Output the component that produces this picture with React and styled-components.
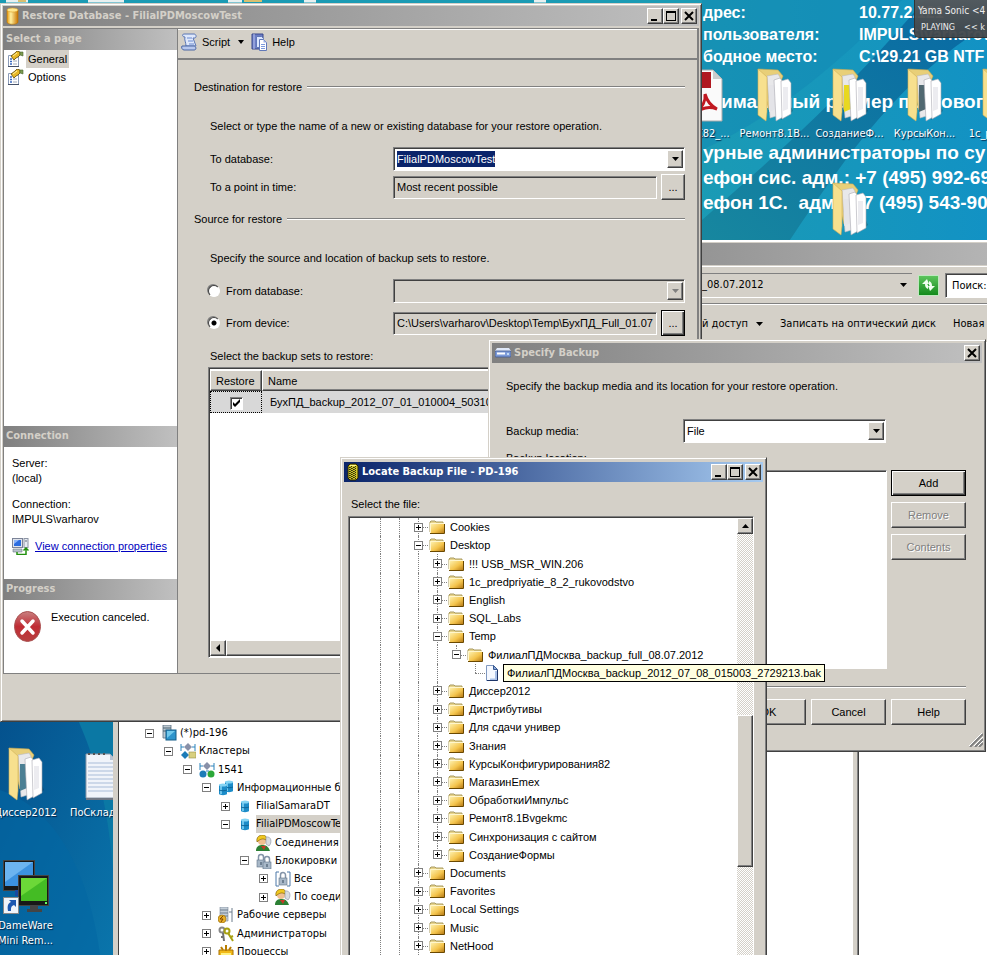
import React from 'react';
import styled, { createGlobalStyle, css } from 'styled-components';

const face = '#d4d0c8';
const shade = '#808080';
const dark = '#404040';
const navy = '#0a246a';
const sans = '"Liberation Sans", Arial, sans-serif';
const tahoma = '"DejaVu Sans Condensed", "DejaVu Sans", Tahoma, sans-serif';

const raised = css`
  border: 1px solid;
  border-color: #fff ${dark} ${dark} #fff;
  box-shadow: inset -1px -1px ${shade};
`;
const sunken = css`
  border: 1px solid;
  border-color: ${shade} #fff #fff ${shade};
  box-shadow: inset 1px 1px ${dark};
`;

const GlobalStyle = createGlobalStyle`
  * { box-sizing: border-box; }
  body { margin: 0; overflow: hidden; }
  button, input, select { font: inherit; color: inherit; }
`;

/* ---------- desktop ---------- */
const Desktop = styled.main`
  position: relative;
  height: 100vh;
  overflow: hidden;
  background: #05659c;
  font: 11px/16px ${sans};
  color: #000;
  white-space: nowrap;
`;
const Wallpaper = styled.svg`
  position: absolute;
  inset: 0;
  width: 100%;
  height: 100%;
`;
const HostInfo = styled.section`
  position: absolute;
  left: 703px;
  top: 2px;
  color: #fff;
  font: bold 16px/22px ${sans};
`;
const HostFacts = styled.dl`
  display: grid;
  grid-template-columns: 156px auto;
  margin: 0 0 21px;
  dt, dd { margin: 0; }
`;
const Notice = styled.p`
  margin: 0 0 26px;
  padding-left: 18px;
  font-size: 19px;
  line-height: 25px;
`;
const Contacts = styled.p`
  margin: 0;
  font-size: 19px;
  line-height: 25px;
  white-space: pre;
`;
const Shortcuts = styled.div`
  position: absolute;
  left: ${(p) => p.$left}px;
  top: ${(p) => p.$top}px;
  display: grid;
  grid-template-columns: repeat(5, 75px);
  row-gap: ${(p) => p.$gap}px;
`;
const Shortcut = styled.a`
  display: flex;
  flex-direction: column;
  align-items: center;
  gap: 3px;
  grid-column: ${(p) => p.$col || 'auto'};
  color: #fff;
  font: 11px/15px ${tahoma};
  text-align: center;
  text-decoration: none;
  text-shadow: 1px 1px 1px #024;
`;
const Player = styled.aside`
  position: absolute;
  left: 914px;
  right: 0;
  top: 0;
  height: 38px;
  padding: 2px 0 0 3px;
  border: 1px solid #333;
  border-width: 0 0 1px 1px;
  border-radius: 0 0 0 5px;
  background: linear-gradient(#55595cf4, #404549f4);
  color: #eee;
  font: 10px/17px ${tahoma};
  overflow: hidden;
`;
const PlayerState = styled.div`
  display: flex;
  gap: 9px;
  padding-left: 3px;
  font-size: 9px;
`;

/* ---------- windows ---------- */
const Window = styled.section`
  position: absolute;
  display: flex;
  flex-direction: column;
  background: ${face};
  border: 1px solid;
  border-color: ${face} ${dark} ${dark} ${face};
  box-shadow: inset 1px 1px #fff, inset -1px -1px ${shade};
`;
const RestoreWindow = styled(Window)`
  left: 0;
  top: 3px;
  width: 702px;
  height: 719px;
  padding: 2px;
`;
const SpecifyWindow = styled(Window)`
  left: 488px;
  top: 339px;
  width: 498px;
  height: 413px;
  padding: 3px;
`;
const LocateWindow = styled(Window)`
  left: 340px;
  top: 457px;
  bottom: 0;
  width: 427px;
  padding: 4px 3px 0;
  border-bottom: 0;
  box-shadow: inset 1px 1px #fff, inset -1px 0 ${shade};
`;
const TitleBar = styled.header`
  display: flex;
  align-items: center;
  flex: none;
  height: 20px;
  padding: 0 2px 0 3px;
  gap: 3px;
  background: ${(p) => (p.$active ? `linear-gradient(90deg, ${navy}, #a6caf0)` : 'linear-gradient(90deg, #808080, #c0c0c0)')};
  color: ${(p) => (p.$active ? '#fff' : face)};
`;
const Title = styled.h1`
  flex: 1;
  margin: 0;
  font: bold 11px/18px ${tahoma};
`;
const CaptionButtons = styled.div`
  display: flex;
  button:last-child:not(:first-child) { margin-left: 2px; }
`;
const CaptionButton = styled.button`
  ${raised}
  display: grid;
  place-items: center;
  width: 16px;
  height: 16px;
  padding: 0;
  background: ${face};
  color: #000;
`;
const Button = styled.button`
  ${raised}
  width: ${(p) => p.$w || 75}px;
  height: 26px;
  padding: 0;
  background: ${face};
  ${(p) => p.$default && css`
    border-color: #000;
    box-shadow: inset 1px 1px #fff, inset -1px -1px ${dark}, inset -2px -2px ${shade};
  `}
  &:disabled {
    color: ${shade};
    text-shadow: 1px 1px #fff;
  }
`;

/* ---------- form parts ---------- */
const Combo = styled.div`
  ${sunken}
  position: relative;
  display: flex;
  align-items: center;
  width: ${(p) => (p.$w ? `${p.$w}px` : 'auto')};
  height: 24px;
  padding: 2px 1px 2px 2px;
  background: ${(p) => (p.$off ? face : '#fff')};
`;
const ComboSelect = styled.select`
  flex: 1;
  align-self: stretch;
  border: 0;
  padding: 0 1px;
  background: none;
  appearance: none;
  outline: 0;
`;
const ComboInput = styled.input`
  field-sizing: content;
  height: 16px;
  margin: 0 auto 0 1px;
  padding: 0;
  border: 0;
  background: ${navy};
  color: #fff;
  outline: 0;
`;
const ComboArrow = styled.span`
  ${raised}
  display: grid;
  place-items: center;
  width: 16px;
  align-self: stretch;
  background: ${face};
  color: ${(p) => (p.$off ? shade : '#000')};
  pointer-events: none;
`;
const ReadOnly = styled.input`
  ${sunken}
  flex: 1;
  min-width: 0;
  height: 23px;
  padding: 0 0 0 3px;
  background: ${face};
  outline: 0;
`;

/* ---------- Restore Database ---------- */
const RestoreBody = styled.div`
  display: grid;
  grid-template-columns: 174px 1fr;
  flex: 1;
  margin: 2px 0 45px;
  border: 1px solid ${shade};
  border-right-width: 2px;
`;
const Side = styled.aside`
  display: flex;
  flex-direction: column;
  background: #fff;
  border-right: 1px solid ${shade};
`;
const SideHead = styled.h2`
  flex: none;
  margin: 0;
  height: 21px;
  padding-left: 2px;
  background: linear-gradient(90deg, #808080, #c0c0c0);
  color: ${face};
  font: bold 11px/20px ${tahoma};
`;
const Pages = styled.nav`
  flex: 1;
  display: flex;
  flex-direction: column;
  align-items: flex-start;
`;
const PageLink = styled.a`
  display: flex;
  align-items: center;
  gap: 2px;
  height: 18px;
  padding-left: 3px;
  color: #000;
  text-decoration: none;
  span {
    padding: 0 2px;
    line-height: 18px;
    background: ${(p) => (p.$on ? face : 'none')};
  }
`;
const Connection = styled.div`
  flex: none;
  height: 132px;
  padding: 9px 8px;
  line-height: 15px;
`;
const Fact = styled.p`
  margin: 0 0 11px;
`;
const PropsLink = styled.a`
  display: flex;
  align-items: center;
  gap: 6px;
  color: #0000c0;
`;
const Progress = styled.div`
  flex: none;
  display: flex;
  gap: 10px;
  height: 73px;
  padding: 9px 10px;
  svg { margin-top: 2px; }
`;
const Main = styled.div`
  display: flex;
  flex-direction: column;
  min-width: 0;
`;
const Toolbar = styled.div`
  display: flex;
  align-items: center;
  flex: none;
  height: 31px;
  padding: 0 3px 4px;
  border-bottom: 2px solid ${shade};
  border-top: 1px solid #fff;
`;
const ToolButton = styled.button`
  display: flex;
  align-items: center;
  gap: 4px;
  padding: 0;
  margin-right: 7px;
  border: 0;
  background: none;
  span { margin-right: 4px; }
`;
const Form = styled.form`
  flex: 1;
  display: flex;
  flex-direction: column;
  min-height: 0;
  padding: 19px 12px 15px 16px;
`;
const GroupTitle = styled.h3`
  display: flex;
  align-items: center;
  gap: 5px;
  margin: 0 0 23px;
  font: inherit;
  &::after {
    content: '';
    flex: 1;
    border-top: 1px solid ${shade};
    border-bottom: 1px solid #fff;
  }
`;
const Hint = styled.p`
  margin: 0 0 13px 16px;
`;
const FieldRow = styled.div`
  display: grid;
  grid-template-columns: 199px 1fr;
  align-items: center;
  margin-bottom: ${(p) => p.$after || 3}px;
`;
const FieldLabel = styled.label`
  display: flex;
  align-items: center;
  gap: 6px;
  padding-left: ${(p) => (p.$radio ? 14 : 16)}px;
`;
const Radio = styled.input`
  appearance: none;
  width: 12px;
  height: 12px;
  margin: 0;
  border: 1px solid;
  border-color: ${dark} #fff #fff ${dark};
  border-radius: 50%;
  background: #fff;
  box-shadow: -1px -1px ${shade};
  &:checked {
    background: radial-gradient(circle, #000 2px, #fff 3px);
  }
`;
const FieldWithButton = styled.div`
  display: flex;
  align-items: center;
  gap: 4px;
  min-width: 0;
`;
const SetsLabel = styled.p`
  margin: 9px 0 3px 16px;
`;
const Sets = styled.div`
  ${sunken}
  flex: 1;
  display: flex;
  flex-direction: column;
  margin-left: 14px;
  padding: 2px 1px 1px;
  overflow: hidden;
  background: #fff;
`;
const SetsTable = styled.table`
  width: 100%;
  border-collapse: separate;
  border-spacing: 0;
  th {
    ${raised}
    height: 21px;
    padding: 0 5px;
    background: ${face};
    font-weight: normal;
    text-align: left;
  }
  th:first-child { width: 52px; }
  td {
    height: 22px;
    padding: 0 8px;
    background: #d8d8d8;
  }
  td:first-child {
    padding: 0;
    text-align: center;
    border: 1px dotted #000;
  }
`;
const Check = styled.input`
  ${sunken}
  appearance: none;
  width: 13px;
  height: 13px;
  margin: 0;
  vertical-align: middle;
  background: #fff;
  &:checked {
    background: #fff url("data:image/svg+xml,%3Csvg xmlns='http://www.w3.org/2000/svg' viewBox='0 0 11 11'%3E%3Cpath d='M2 4v3l2 2 5-5V1L4 6z'/%3E%3C/svg%3E") center / 11px no-repeat;
  }
`;
const HScroll = styled.div`
  display: flex;
  height: 16px;
  margin-top: auto;
`;
const ScrollThumb = styled.div`
  ${raised}
  flex: ${(p) => p.$size || 1};
  background: ${face};
`;

/* ---------- Specify Backup ---------- */
const SpecifyBody = styled.div`
  flex: 1;
  display: flex;
  flex-direction: column;
  padding: 15px 16px 23px 14px;
`;
const SpecifyHint = styled.p`
  margin: 0 0 25px;
`;
const MediaRow = styled.div`
  display: grid;
  grid-template-columns: 177px auto;
  justify-content: start;
  align-items: center;
  margin-bottom: 7px;
`;
const Locations = styled.div`
  flex: 1;
  display: grid;
  grid-template-columns: 1fr auto;
  gap: 4px;
  margin: 4px 0 17px;
`;
const LocationList = styled.div`
  ${sunken}
  background: #fff;
`;
const ButtonColumn = styled.div`
  display: flex;
  flex-direction: column;
  gap: 6px;
`;
const ButtonRow = styled.footer`
  display: flex;
  justify-content: flex-end;
  gap: 5px;
  padding-top: 12px;
  border-top: 1px solid ${shade};
  box-shadow: inset 0 1px #fff;
`;
const Grip = styled.svg`
  position: absolute;
  right: 2px;
  bottom: 4px;
`;

/* ---------- Locate Backup File ---------- */
const LocateLabel = styled.p`
  margin: 14px 0 4px 7px;
`;
const TreeBox = styled.div`
  ${sunken}
  flex: 1;
  display: flex;
  min-height: 0;
  margin: 0 9px 0 4px;
  padding: 1px 0 0 1px;
  border-bottom: 0;
  background: #fff;
`;
const Tree = styled.ul`
  flex: 1;
  display: flex;
  flex-direction: column;
  min-width: 0;
  margin: 0;
  padding: 0 0 0 21px;
  list-style: none;
`;
const TreeRow = styled.li`
  flex: 1;
  display: flex;
  align-items: center;
  min-height: 0;
  > svg { flex: none; margin: 0 5px 0 1px; }
`;
const Guide = styled.span`
  position: relative;
  display: grid;
  place-items: center;
  flex: none;
  width: 19px;
  align-self: stretch;
  &::before {
    content: '';
    position: absolute;
    left: 9px;
    top: 0;
    height: ${(p) => (p.$half ? '50%' : '100%')};
    border-left: ${(p) => (p.$blank ? 0 : 1)}px dotted ${shade};
  }
  &::after {
    content: '';
    position: absolute;
    left: 9px;
    right: 0;
    top: 50%;
    border-top: ${(p) => (p.$branch ? 1 : 0)}px dotted ${shade};
  }
`;
const Expander = styled.button`
  position: relative;
  z-index: 1;
  display: grid;
  place-items: center;
  width: 9px;
  height: 9px;
  padding: 0;
  border: 1px solid ${shade};
  background: #fff;
`;
const TreeLabel = styled.span`
  line-height: 18px;
`;
const SelectedFile = styled.span`
  position: relative;
  flex: 1;
  align-self: stretch;
  min-width: 0;
  background: ${navy};
`;
const Tooltip = styled.span`
  position: absolute;
  z-index: 2;
  left: 0;
  top: 0;
  height: 18px;
  padding: 0 3px;
  border: 1px solid #000;
  background: #ffffe1;
`;
const VScroll = styled.div`
  display: flex;
  flex-direction: column;
  width: 16px;
  background: repeating-conic-gradient(#fff 0 25%, ${face} 0 50%) 0 0 / 2px 2px;
`;
const ScrollGap = styled.div`
  flex: ${(p) => p.$size};
`;

/* ---------- server console and explorer ---------- */
const Console = styled(Window)`
  left: 113px;
  top: 600px;
  bottom: 0;
  width: 746px;
  padding: 123px 4px 0;
  border-bottom: 0;
  background: linear-gradient(90deg, ${face} 4px, ${dark} 4px 5px, #fff 5px calc(100% - 5px), ${face} 0);
  box-shadow: inset -1px 0 ${shade};
`;
const ConsoleTree = styled.ul`
  display: flex;
  flex-direction: column;
  flex: none;
  height: 237px;
  margin: 0;
  padding: 0 0 0 22px;
  list-style: none;
  font-family: ${tahoma};
`;
const ConsoleRow = styled.li`
  flex: 1;
  display: flex;
  align-items: center;
  padding-left: ${(p) => p.$depth * 19}px;
  > svg { margin: 0 3px 0 2px; }
`;
const ExpanderCell = styled.span`
  display: grid;
  place-items: center;
  width: 19px;
`;
const ConsoleLabel = styled.span`
  line-height: 18px;
  background: ${(p) => (p.$selected ? face : 'none')};
`;
const Explorer = styled.section`
  position: absolute;
  left: 702px;
  right: 0;
  top: 240px;
  bottom: 0;
  display: flex;
  flex-direction: column;
  border-top: 2px solid #fff;
  background: #fff;
  font-family: ${tahoma};
  overflow: hidden;
`;
const ExplorerTitle = styled.div`
  height: 24px;
  border-top: 1px solid ${face};
  border-bottom: 1px solid ${face};
  background: linear-gradient(90deg, #959595, #b4b4b4);
`;
const AddressBar = styled.div`
  display: flex;
  align-items: center;
  gap: 6px;
  height: 38px;
  background: ${face};
  border-top: 1px solid #fff;
  border-bottom: 1px solid ${shade};
`;
const Address = styled.div`
  display: flex;
  align-items: center;
  width: 210px;
  height: 25px;
  border: 1px solid;
  border-color: ${shade} #fff #fff;
  border-width: 1px 0;
  > span { flex: 1; }
  > svg { margin-right: 5px; }
`;
const GoButton = styled.button`
  display: grid;
  place-items: center;
  width: 21px;
  height: 21px;
  padding: 0;
  border: 1px solid #bfe8bf;
  background: linear-gradient(#5cc45c, #148a1c);
`;
const SearchBox = styled.input`
  ${sunken}
  flex: 1;
  min-width: 0;
  height: 25px;
  padding: 0 0 0 6px;
  border-right: 0;
  background: #fff;
  &::placeholder { color: #000; opacity: 1; }
`;
const CommandBar = styled.div`
  display: flex;
  align-items: center;
  gap: 17px;
  height: 38px;
  background: ${face};
  border-top: 1px solid #fff;
`;
const Command = styled.button`
  flex: none;
  display: flex;
  align-items: center;
  gap: 8px;
  padding: 0;
  border: 0;
  background: none;
`;

/* ---------- drawings ---------- */
const Arrow = ({ w = 7 }) => (
  <svg width={w} height="4" viewBox="0 0 7 4" preserveAspectRatio="none"><path d="M0 0h7L3.500 4z" fill="currentColor" /></svg>
);
const Glyph = ({ d }) => (
  <svg width="12" height="12" viewBox="0 0 12 12"><path d={d} fill="none" stroke="#000" strokeWidth="2" /></svg>
);
const MIN = 'M2 10h6';
const MaxGlyph = () => (
  <svg width="12" height="12" viewBox="0 0 12 12"><path d="M1 1h10v10H1zM2 3v7h8V3z" fillRule="evenodd" /></svg>
);
const CLOSE = 'M2 2l8 8M10 2l-8 8';

const Folder = () => (
  <svg width="16" height="14" viewBox="0 0 16 14">
    <defs>
      <linearGradient id="fold" x1="0" y1="0" x2="1" y2="1">
        <stop offset="0" stopColor="#fff6b8" /><stop offset=".6" stopColor="#f4c44c" /><stop offset="1" stopColor="#b87c18" />
      </linearGradient>
    </defs>
    <path d="M1 12V2l1-1h4l1 1h7v2" fill="#e8d48a" stroke="#a89a60" />
    <path d="M1 3h14v10H1z" fill="url(#fold)" />
    <path d="M1 13.500h14.500V4" fill="none" stroke="#6a4800" />
    <path d="M1.500 13V3.500H15" fill="none" stroke="#fff6cc" />
  </svg>
);
const Sheet = () => (
  <svg width="12" height="16" viewBox="0 0 12 16">
    <path d="M.5.5h7l4 4v11H.5z" fill="#f4f8ff" stroke="#8098c0" />
    <path d="M7.500.5v4h4z" fill="#88a8dc" stroke="#3a5a90" />
    <path d="M10 6v8.500H4" fill="none" stroke="#a8c0e8" strokeWidth="2" />
    <path d="M11.500 5v10.500H1" fill="none" stroke="#1c3468" />
  </svg>
);
const Cylinder = () => (
  <svg width="13" height="18" viewBox="0 0 13 18">
    <defs><linearGradient id="cyl"><stop offset="0" stopColor="#e89a10" /><stop offset=".35" stopColor="#fff0a0" /><stop offset="1" stopColor="#c87400" /></linearGradient></defs>
    <path d="M1 3v12c0 3 11 3 11 0V3z" fill="url(#cyl)" stroke="#b87400" strokeWidth=".6" />
    <ellipse cx="6.500" cy="3" rx="5.500" ry="2" fill="#ffe890" stroke="#d89a20" strokeWidth=".6" />
  </svg>
);
const ServerCylinder = () => (
  <svg width="12" height="18" viewBox="0 0 12 18">
    <path d="M1 3l2-2h6l2 2v12l-2 2H3l-2-2z" fill="#d0c428" stroke="#282400" />
    <path d="M2.500 4v11M4.500 3v13M6.500 4v12M8.500 3v13" stroke="#2c3010" strokeDasharray="1 1" />
    <path d="M3.500 3v12M5.500 4v12M7.500 3v13" stroke="#4c5010" strokeDasharray="1 1" strokeDashoffset="1" />
    <path d="M3 2.500h6" stroke="#fff88a" />
  </svg>
);
const Drive = () => (
  <svg width="16" height="12" viewBox="0 0 16 12">
    <path d="M2 1h12l2 3H0z" fill="#dfe8f8" />
    <rect x="0" y="4" width="16" height="6" rx="1" fill="#7c9ad8" stroke="#40598f" strokeWidth=".8" />
    <path d="M2 6.500h8" stroke="#fff" strokeWidth="2" /><circle cx="13" cy="7" r="1" fill="#d8f0ff" />
  </svg>
);
const PageIcon = () => (
  <svg width="17" height="16" viewBox="0 0 17 16">
    <path d="M1.500 4.500h10v11h-10z" fill="#fff" stroke="#8c9cb8" />
    <path d="M3 8h2M3 10.500h2M3 13h2" stroke="#3868c0" strokeWidth="1.500" />
    <path d="M6 10h4M6 13h4" stroke="#a0a8b8" />
    <path d="M1 15.500h11" stroke="#445068" />
    <path d="M4 5l4-3 2-2 3 1v3l-2 2-2 1-2 2z" fill="#e8b828" stroke="#604800" strokeWidth=".8" />
    <path d="M6 5l4-3" stroke="#fff0a0" /><path d="M13 1h3v4l-3-1z" fill="#7c9c50" stroke="#4c6430" strokeWidth=".6" />
  </svg>
);
const ScriptIcon = () => (
  <svg width="17" height="18" viewBox="0 0 17 18">
    <path d="M3 1h10c2 0 3 3 1 4h-2c1 3 2 5 3 8H5C5 9 3 7 4 4 1 4 1 1 3 1z" fill="#dfe8fb" stroke="#5a76b4" />
    <path d="M1 13h12c2 0 3 4 0 4H3c-2 0-3-3-2-4z" fill="#b8c8ee" stroke="#4a66a4" />
    <path d="M6 5h5M7 8h5M8 11h5" stroke="#6a8ad0" />
  </svg>
);
const HelpIcon = () => (
  <svg width="17" height="18" viewBox="0 0 17 18">
    <path d="M1 1h11v15H1z" fill="#6c7cc4" stroke="#38488c" /><path d="M3 1v15" stroke="#b8c4f0" />
    <path d="M5.500 3.500h5l2 2v9h-7z" fill="#dce6ff" stroke="#6078b8" />
    <path d="M8.500 6.500h4l3 3v8h-7z" fill="#fff" stroke="#6078b8" /><path d="M12.500 6.500v3h3z" fill="#9cb0e4" /><path d="M10 11.500h4M10 13.500h4M10 15.500h4" stroke="#7c9adc" />
  </svg>
);
const NetIcon = () => (
  <svg width="17" height="17" viewBox="0 0 17 17">
    <rect x=".5" y=".5" width="10" height="9" fill="#e0e4ec" stroke="#7c8498" /><rect x="2" y="2" width="7" height="6" fill="#2c6ce0" /><path d="M2 2h5L2 6z" fill="#8cb4f8" />
    <path d="M1 11h9v3H1z" fill="#b8c0cc" stroke="#707888" strokeWidth=".6" />
    <rect x="12" y=".5" width="4" height="9" fill="#e8ecf4" stroke="#8c94a4" /><path d="M13 3h2" stroke="#606878" />
    <path d="M5 14v2.500h9V10M11.500 12.500L14 10l2.500 2.500" fill="none" stroke="#20900c" strokeWidth="1.500" />
  </svg>
);
const ErrorIcon = () => (
  <svg width="27" height="31" viewBox="0 0 27 31">
    <defs><linearGradient id="err" x1="0" y1="0" x2="0" y2="1"><stop offset="0" stopColor="#c88080" /><stop offset=".5" stopColor="#c02c34" /><stop offset="1" stopColor="#b84040" /></linearGradient></defs>
    <ellipse cx="13.500" cy="15.500" rx="13" ry="15" fill="url(#err)" stroke="#a85050" />
    <path d="M8 10l11 12M19 10L8 22" stroke="#fff" strokeWidth="3.500" strokeLinecap="round" />
  </svg>
);
const BigFolder = ({ tint = '#e4e4e8' }) => (
  <svg width="36" height="56" viewBox="0 0 36 56">
    <path d="M30 30l6 14-12 9z" fill="#0003" />
    <path d="M1 2l20 1 5 6-14 34z" fill="#e8cf78" stroke="#c8a850" strokeWidth=".6" />
    <path d="M10 9l11-2 2 3v38l-10 3z" fill="#e8e8ea" stroke="#b8b8bc" strokeWidth=".6" />
    <path d="M12 18h7v24l-7 3z" fill={tint} />
    <path d="M17 13l6-2 3 4v35l-7 4z" fill="#fff" stroke="#a8a8b0" strokeWidth=".6" />
    <path d="M24 14l7-2 3 4v31l-9 5z" fill="#fff" stroke="#a8a8b0" strokeWidth=".6" />
    <path d="M26 20h5v22l-5 2z" fill="#ececf0" />
    <path d="M1 2l9 8v35l-1 9-8-6z" fill="#f7e08e" stroke="#d0b058" strokeWidth=".6" />
  </svg>
);
const PdfIcon = () => (
  <svg width="46" height="56" viewBox="0 0 46 56">
    <path d="M2 3h34l9 9v42H2z" fill="#fafafa" stroke="#aaa" />
    <path d="M2 5h32v16H2z" fill="#b01820" /><path d="M36 3v9h9z" fill="#ccc" />
    <path d="M18 47c8-8 11-13 10-20 2 7 6 12 12 15-8-3-16-1-22 5z" fill="none" stroke="#c01820" strokeWidth="3" />
  </svg>
);
const NoteIcon = () => (
  <svg width="32" height="56" viewBox="0 0 32 56">
    <path d="M1 8h24l6 6v38H1z" fill="#f0f4fa" stroke="#8c98a8" />
    <path d="M3 17h26M3 21h26M3 25h26M3 29h26M3 33h26M3 37h26M3 41h26M3 45h26" stroke="#a8bcd8" />
    <path d="M3 8h20" stroke="#555" strokeWidth="2" strokeDasharray="2 3" /><path d="M25 8v6h6z" fill="#b8c4d4" />
    <path d="M1 53h30" stroke="#707884" strokeWidth="2" />
  </svg>
);
const DameWareIcon = () => (
  <svg width="46" height="55" viewBox="0 0 46 55">
    <rect x=".5" y=".5" width="31" height="30" fill="#181818" stroke="#444" /><rect x="2" y="2" width="28" height="24" fill="#3c92e0" /><path d="M2 2h28L2 22z" fill="#6cb4f0" />
    <path d="M12 30h8v6h-8z" fill="#1848a0" />
    <rect x="15.500" y="15.500" width="30" height="30" fill="#181818" stroke="#444" /><rect x="18" y="18" width="26" height="23" fill="#44bc24" /><path d="M18 18h26L18 36z" fill="#6cd838" />
    <path d="M27 45h8v4h4v3H24v-3h3z" fill="#444" /><path d="M42 43h2" stroke="#6f6" strokeWidth="2" />
    <rect x=".5" y="37.500" width="15" height="16" fill="#eef4fa" stroke="#888" /><path d="M5 51c-1-5 0-8 3-9l-2-2h7v7l-2-2c-3 1-3 3-3 6z" fill="#1c58b0" />
  </svg>
);
const Svg16 = ({ children }) => <svg width="16" height="16" viewBox="0 0 16 16">{children}</svg>;
const diamond = (x, y) => `M${x} ${y - 4}l4 4-4 4-4-4z`;
const lock = (x) => (
  <g><path d={`M${x + 1.5} 7V4a2.500 2.500 0 015 0v3`} fill="none" stroke="#8494a8" strokeWidth="1.500" /><rect x={x} y="7" width="8" height="7" fill="#a8b8c8" stroke="#607488" strokeWidth=".6" /><path d={`M${x + 4} 9v3`} stroke="#34485c" /></g>
);
const drum = (x, y) => (
  <g><path d={`M${x} ${y}h8v9c-1 1.500-7 1.500-8 0z`} fill="#1c8cc8" /><path d={`M${x + 2} ${y}v9`} stroke="#6cc4ec" strokeWidth="2" /><ellipse cx={x + 4} cy={y} rx="4" ry="1.500" fill="#84d4f4" /><path d={`M${x} ${y + 5}c2 1 6 1 8 0`} fill="none" stroke="#0c6498" /></g>
);
const icons = {
  server: <Svg16><path d="M2 0h8v13H2z" fill="#bcc8d0" stroke="#5c7080" strokeWidth=".8" /><path d="M2 3h8M2 6h8" stroke="#4c6474" /><rect x="5" y="5" width="10" height="10" fill="#2c94cc" stroke="#145c88" /><path d="M6 6h8l-8 7z" fill="#70c8ec" /></Svg16>,
  clusters: <Svg16><path d={diamond(8, 4)} fill="#8890a8" /><path d={diamond(5, 12)} fill="#1c7cb8" /><rect x="9" y="9" width="7" height="6" fill="#d8d080" stroke="#98904c" strokeWidth=".6" /><path d="M1 8V4h3M15 8V4h-3M1 1v3M15 1v3" fill="none" stroke="#2c84bc" /></Svg16>,
  cluster: <Svg16><path d={diamond(8, 4)} fill="#8890a8" /><circle cx="4" cy="12" r="3.500" fill="#1c7cb8" /><circle cx="12" cy="12" r="3.500" fill="#2ca838" /><path d="M1 8V4h3M15 8V4h-3M1 1v3M15 1v3M7 9h3" fill="none" stroke="#2c84bc" /></Svg16>,
  bases: <Svg16>{drum(7, 2)}{drum(1, 5)}</Svg16>,
  base: <Svg16>{drum(4, 4)}</Svg16>,
  people: <Svg16><path d="M0 16c0-5 3-6 7-6s6 3 7 6z" fill="#2c8034" /><circle cx="6" cy="6" r="4" fill="#f0c090" /><path d="M1 7c-2-9 12-9 9-2-3-2-6-1-9 2z" fill="#f0c820" stroke="#705000" strokeWidth=".6" /><path d="M10 2c6-1 6 6 3 9l-3-2z" fill="#d8dce0" stroke="#8890a0" strokeWidth=".6" /><path d="M5 11l3 4 2-4" fill="#c83828" /></Svg16>,
  locks: <Svg16>{lock(1)}<g transform="translate(6 2)">{lock(1)}</g></Svg16>,
  all: <Svg16><path d="M4 1H1v14h3M12 1h3v14h-3" fill="none" stroke="#4c78a8" />{lock(4)}</Svg16>,
  workers: <Svg16><path d="M2 0h8v14H2z" fill="#c4ced8" stroke="#788898" strokeWidth=".6" /><path d="M2 3h8M2 6h8M2 9h8M14 1v14M11 5h3" stroke="#6c7c8c" /><circle cx="4" cy="12" r="4" fill="#e8b028" stroke="#946808" strokeWidth=".6" /><path d="M5 9l-3 3h3l-2 3" fill="none" stroke="#804400" /></Svg16>,
  keys: <Svg16><circle cx="4" cy="4" r="2.500" fill="none" stroke="#888" strokeWidth="2" /><path d="M5 7l1 8M5 11H3" stroke="#707070" strokeWidth="2" /><circle cx="9" cy="5" r="2.500" fill="none" stroke="#a8a010" strokeWidth="2" /><path d="M10 7l5 8M13 11l2-1" stroke="#a8a010" strokeWidth="2" /></Svg16>,
  process: <Svg16><path d="M1 6h14v7c-3 3-11 3-14 0z" fill="#f0b818" stroke="#a87000" /><path d="M8 7V1M3 3l2 3M13 3l-2 3" stroke="#b87c00" strokeWidth="2" /><path d="M3 10h10" stroke="#fff080" strokeWidth="2" /></Svg16>,
};
const PlusMinus = ({ open }) => (
  <svg width="7" height="7" viewBox="0 0 7 7"><path d={open ? 'M1 3.500h5' : 'M1 3.500h5M3.500 1v5'} stroke="#000" /></svg>
);

/* ---------- data ---------- */
const files = [
  { t: 'Cookies', d: 0 }, { t: 'Desktop', d: 0, open: true },
  { t: '!!! USB_MSR_WIN.206', d: 1 }, { t: '1c_predpriyatie_8_2_rukovodstvo', d: 1 }, { t: 'English', d: 1 }, { t: 'SQL_Labs', d: 1 },
  { t: 'Temp', d: 1, open: true },
  { t: 'ФилиалПДМосква_backup_full_08.07.2012', d: 2, open: true, last: true },
  { t: 'ФилиалПДМосква_backup_2012_07_08_015003_2729213.bak', d: 3, file: true, last: true },
  { t: 'Диссер2012', d: 1 }, { t: 'Дистрибутивы', d: 1 }, { t: 'Для сдачи универ', d: 1 }, { t: 'Знания', d: 1 },
  { t: 'КурсыКонфигурирования82', d: 1 }, { t: 'МагазинEmex', d: 1 }, { t: 'ОбработкиИмпульс', d: 1 }, { t: 'Ремонт8.1Bvgekmc', d: 1 },
  { t: 'Синхронизация с сайтом', d: 1 }, { t: 'СозданиеФормы', d: 1, last: true },
  { t: 'Documents', d: 0 }, { t: 'Favorites', d: 0 }, { t: 'Local Settings', d: 0 }, { t: 'Music', d: 0 }, { t: 'NetHood', d: 0 },
];
const servers = [
  ['(*)pd-196', 0, 'server', true], ['Кластеры', 1, 'clusters', true], ['1541', 2, 'cluster', true],
  ['Информационные базы', 3, 'bases', true], ['FilialSamaraDT', 4, 'base', false], ['FilialPDMoscowTest', 4, 'base', true],
  ['Соединения', 5, 'people', null], ['Блокировки', 5, 'locks', true], ['Все', 6, 'all', false], ['По соединениям', 6, 'people', false],
  ['Рабочие серверы', 3, 'workers', false], ['Администраторы', 3, 'keys', false], ['Процессы', 3, 'process', false],
];

const Captions = ({ closeOnly }) => (
  <CaptionButtons>
    {!closeOnly && <CaptionButton aria-label="Minimize"><Glyph d={MIN} /></CaptionButton>}
    {!closeOnly && <CaptionButton aria-label="Maximize"><MaxGlyph /></CaptionButton>}
    <CaptionButton aria-label="Close"><Glyph d={CLOSE} /></CaptionButton>
  </CaptionButtons>
);

function FileRow({ item }) {
  const guides = [];
  for (let i = 0; i < item.d + 2; i += 1) guides.push(<Guide key={i} $blank={i === 4} />);
  return (
    <TreeRow>
      {guides}
      <Guide $branch $half={item.last}>
        {!item.file && <Expander aria-label={`Toggle ${item.t}`}><PlusMinus open={item.open} /></Expander>}
      </Guide>
      {item.file ? <Sheet /> : <Folder />}
      {item.file ? <SelectedFile><Tooltip>{item.t}</Tooltip></SelectedFile> : <TreeLabel>{item.t}</TreeLabel>}
    </TreeRow>
  );
}

export default function App() {
  return (
    <Desktop>
      <GlobalStyle />
      <Wallpaper viewBox="0 0 987 955" preserveAspectRatio="none" aria-hidden="true">
        <defs>
          <linearGradient id="sky" x1="0" y1="0" x2="1" y2="0"><stop offset=".7" stopColor="#1b9bb4" /><stop offset="1" stopColor="#1292c4" /></linearGradient>
          <linearGradient id="band" x1="0" y1="1" x2="1" y2="0"><stop offset="0" stopColor="#17879f" /><stop offset="1" stopColor="#0868a4" /></linearGradient>
          <linearGradient id="deep" x1="0" y1="0" x2="1" y2="1"><stop offset="0" stopColor="#04508c" /><stop offset="1" stopColor="#0a76ac" /></linearGradient>
        </defs>
        <rect width="987" height="241" fill="url(#sky)" />
        <path d="M702 220C770 160 830 110 925 0H987V25C900 80 850 150 790 240H702z" fill="url(#band)" />
        <path d="M702 0h200C850 50 790 110 702 150z" fill="#1187b4" opacity=".5" />
        <rect y="700" width="120" height="255" fill="url(#deep)" />
        <path d="M78 720c20 45 30 90 35 150V720z" fill="#0b78a4" />
        <path d="M0 790c60 20 90 90 100 165H0z" fill="#0368a4" opacity=".6" />
        <path d="M6 1h22M88 1h36M228 1h14M304 1h12M534 1h12" stroke="#e8f0f0" strokeWidth="3" />
        <path d="M18 1h8M244 1h18" stroke="#d8c070" strokeWidth="2" />
      </Wallpaper>

      <HostInfo>
        <HostFacts>
          <dt>дрес:</dt><dd>10.77.2.121</dd>
          <dt>пользователя:</dt><dd>IMPULS\varharov</dd>
          <dt>бодное место:</dt><dd>C:\29.21 GB NTF</dd>
        </HostFacts>
        <Notice>имальный размер почтового</Notice>
        <Contacts>{'урные администраторы по су\nефон сис. адм.: +7 (495) 992-69\nефон 1С.  адм.: +7 (495) 543-90'}</Contacts>
      </HostInfo>

      <Shortcuts $left={662} $top={67} $gap={40}>
        <Shortcut href="#pdf"><PdfIcon />ПланК82_...</Shortcut>
        <Shortcut href="#remont"><BigFolder />Ремонт8.1В...</Shortcut>
        <Shortcut href="#forms"><BigFolder tint="#e8d820" />СозданиеФ...</Shortcut>
        <Shortcut href="#courses"><BigFolder tint="#506870" />КурсыКон...</Shortcut>
        <Shortcut href="#1c"><BigFolder />1c_predpri...</Shortcut>
        <Shortcut href="#folder" $col="3" aria-label="Folder"><BigFolder /></Shortcut>
      </Shortcuts>
      <Shortcuts $left={-12} $top={746} $gap={40}>
        <Shortcut href="#disser"><BigFolder tint="#4c8094" />Диссер2012</Shortcut>
        <Shortcut href="#sklad"><NoteIcon />ПоСклада...</Shortcut>
        <Shortcut href="#dameware" $col="1"><DameWareIcon /><span>DameWare<br />Mini Rem...</span></Shortcut>
      </Shortcuts>

      <Player>
        Yama Sonic &lt;4
        <PlayerState><span>PLAYING</span><span>&lt;&lt; k</span></PlayerState>
      </Player>

      <Explorer>
        <ExplorerTitle />
        <AddressBar>
          <Address><span>_08.07.2012</span><Arrow /></Address>
          <GoButton aria-label="Refresh"><svg width="15" height="14" viewBox="0 0 15 14"><path d="M6 1L1 6h3c0 3 1 4 3 5V7L6 6h2zM9 13l5-5h-3c0-3-1-4-3-5v4l1 1H7z" fill="#f0fff0" /></svg></GoButton>
          <SearchBox aria-label="Поиск" placeholder="Поиск:" />
        </AddressBar>
        <CommandBar>
          <Command>й доступ <Arrow /></Command>
          <Command>Записать на оптический диск</Command>
          <Command>Новая папка</Command>
        </CommandBar>
      </Explorer>

      <Console>
        <ConsoleTree>
          {servers.map(([text, depth, icon, open]) => (
            <ConsoleRow key={text} $depth={open === null ? depth - 1 : depth}>
              <ExpanderCell>{open !== null && <Expander aria-label={`Toggle ${text}`}><PlusMinus open={open} /></Expander>}</ExpanderCell>
              {open === null && <ExpanderCell />}
              {icons[icon]}
              <ConsoleLabel $selected={text === 'FilialPDMoscowTest'}>{text}</ConsoleLabel>
            </ConsoleRow>
          ))}
        </ConsoleTree>
      </Console>

      <RestoreWindow>
        <TitleBar><Cylinder /><Title>Restore Database - FilialPDMoscowTest</Title><Captions /></TitleBar>
        <RestoreBody>
          <Side>
            <SideHead>Select a page</SideHead>
            <Pages>
              <PageLink href="#general" $on><PageIcon /><span>General</span></PageLink>
              <PageLink href="#options"><PageIcon /><span>Options</span></PageLink>
            </Pages>
            <SideHead>Connection</SideHead>
            <Connection>
              <Fact>Server:<br />(local)</Fact>
              <Fact>Connection:<br />IMPULS\varharov</Fact>
              <PropsLink href="#connection"><NetIcon />View connection properties</PropsLink>
            </Connection>
            <SideHead>Progress</SideHead>
            <Progress><ErrorIcon />Execution canceled.</Progress>
          </Side>
          <Main>
            <Toolbar>
              <ToolButton><ScriptIcon /><span>Script</span><Arrow w={6} /></ToolButton>
              <ToolButton><HelpIcon />Help</ToolButton>
            </Toolbar>
            <Form onSubmit={(e) => e.preventDefault()}>
              <GroupTitle>Destination for restore</GroupTitle>
              <Hint>Select or type the name of a new or existing database for your restore operation.</Hint>
              <FieldRow>
                <FieldLabel htmlFor="todb">To database:</FieldLabel>
                <Combo><ComboInput id="todb" defaultValue="FilialPDMoscowTest" /><ComboArrow><Arrow /></ComboArrow></Combo>
              </FieldRow>
              <FieldRow $after={11}>
                <FieldLabel htmlFor="point">To a point in time:</FieldLabel>
                <FieldWithButton><ReadOnly id="point" readOnly value="Most recent possible" /><Button type="button" $w={24}>...</Button></FieldWithButton>
              </FieldRow>
              <GroupTitle>Source for restore</GroupTitle>
              <Hint>Specify the source and location of backup sets to restore.</Hint>
              <FieldRow $after={7}>
                <FieldLabel $radio><Radio type="radio" name="source" />From database:</FieldLabel>
                <Combo $off><ComboSelect disabled aria-label="Source database"><option> </option></ComboSelect><ComboArrow $off><Arrow /></ComboArrow></Combo>
              </FieldRow>
              <FieldRow>
                <FieldLabel $radio><Radio type="radio" name="source" defaultChecked />From device:</FieldLabel>
                <FieldWithButton><ReadOnly aria-label="Device path" readOnly value="C:\Users\varharov\Desktop\Temp\БухПД_Full_01.07" /><Button type="button" $w={24} $default>...</Button></FieldWithButton>
              </FieldRow>
              <SetsLabel>Select the backup sets to restore:</SetsLabel>
              <Sets>
                <SetsTable>
                  <thead><tr><th>Restore</th><th>Name</th></tr></thead>
                  <tbody><tr><td><Check type="checkbox" defaultChecked aria-label="Restore this set" /></td><td>БухПД_backup_2012_07_01_010004_5031029</td></tr></tbody>
                </SetsTable>
                <HScroll>
                  <CaptionButton type="button" aria-label="Scroll left"><svg width="4" height="8" viewBox="0 0 4 8"><path d="M4 0v8L0 4z" /></svg></CaptionButton>
                  <ScrollThumb />
                </HScroll>
              </Sets>
            </Form>
          </Main>
        </RestoreBody>
      </RestoreWindow>

      <SpecifyWindow>
        <TitleBar><Drive /><Title>Specify Backup</Title><Captions closeOnly /></TitleBar>
        <SpecifyBody>
          <SpecifyHint>Specify the backup media and its location for your restore operation.</SpecifyHint>
          <MediaRow>
            <label htmlFor="media">Backup media:</label>
            <Combo $w={203}><ComboSelect id="media"><option>File</option></ComboSelect><ComboArrow><Arrow /></ComboArrow></Combo>
          </MediaRow>
          <span>Backup location:</span>
          <Locations>
            <LocationList />
            <ButtonColumn>
              <Button $default>Add</Button>
              <Button disabled>Remove</Button>
              <Button disabled>Contents</Button>
            </ButtonColumn>
          </Locations>
          <ButtonRow><Button>OK</Button><Button>Cancel</Button><Button>Help</Button></ButtonRow>
        </SpecifyBody>
        <Grip width="14" height="14" viewBox="0 0 14 14"><path d="M1 14L14 1M6 14l8-8M10 14l4-4" stroke="#808080" strokeWidth="2" /><path d="M0 13L13 0M5 13l9-9M9 13l5-5" stroke="#fff" /></Grip>
      </SpecifyWindow>

      <LocateWindow>
        <TitleBar $active><ServerCylinder /><Title>Locate Backup File - PD-196</Title><Captions /></TitleBar>
        <LocateLabel>Select the file:</LocateLabel>
        <TreeBox>
          <Tree>{files.map((f) => <FileRow key={f.t} item={f} />)}</Tree>
          <VScroll>
            <CaptionButton aria-label="Scroll up"><svg width="7" height="4" viewBox="0 0 7 4"><path d="M0 4h7L3.500 0z" /></svg></CaptionButton>
            <ScrollGap $size={181} />
            <ScrollThumb $size={151} />
            <ScrollGap $size={88} />
          </VScroll>
        </TreeBox>
      </LocateWindow>
    </Desktop>
  );
}
